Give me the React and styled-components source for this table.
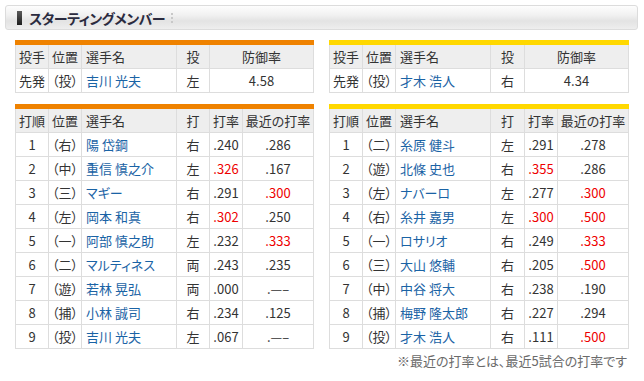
import React from "react";
import styled, { createGlobalStyle } from "styled-components";

const Global = createGlobalStyle`
  html, body { margin: 0; padding: 0; background: #fff; }
  body {
    font-family: "Noto Sans CJK JP", "Liberation Sans", sans-serif;
    font-size: 13px;
    color: #333;
    font-feature-settings: "palt";
  }
`;

const Page = styled.div`
  width: 644px;
  padding: 5px 0 0 0;
  box-sizing: border-box;
`;

const TitleBar = styled.div`
  margin: 0 6px 0 5px;
  height: 25px;
  box-sizing: border-box;
  border: 1px solid #dcdcdc;
  border-radius: 3px;
  background: linear-gradient(#fdfdfd 0%, #f1f1f1 40%, #e3e3e3 65%, #eeeeee 100%);
  display: flex;
  align-items: center;
  padding-left: 11px;
  gap: 7px;
`;

const Marker = styled.span`
  width: 5px;
  height: 14px;
  background: linear-gradient(#5a5a5a, #1e1e1e);
`;

const Title = styled.h2`
  margin: 0;
  font-size: 14px;
  font-weight: bold;
  color: #2b2b3f;
  line-height: 1;
  letter-spacing: -0.5px;
`;

const Dots = styled.span`
  width: 0;
  height: 10px;
  border-left: 2px dotted #c8c8c8;
  margin-left: -1px;
`;

const Columns = styled.div`
  display: grid;
  grid-template-columns: 299px 300px;
  column-gap: 15px;
  padding-left: 15px;
  margin-top: 10px;
`;

const Side = styled.div`
  display: flex;
  flex-direction: column;
`;

const Stack = styled.div`
  display: flex;
  flex-direction: column;
  gap: 11px;
`;

const Block = styled.div`
  border-top: 5px solid ${(p) => p.$color};
`;

const Table = styled.table`
  width: 100%;
  border-collapse: collapse;
  table-layout: fixed;
`;

const Th = styled.th`
  height: 23px;
  padding: 0 ${(p) => (p.$align === "left" ? "4px" : "0")};
  border: 1px solid #dddddd;
  border-top: none;
  background: #eeeeee;
  font-weight: normal;
  text-align: ${(p) => p.$align || "center"};
  white-space: nowrap;
`;

const Td = styled.td`
  height: 23px;
  padding: 0 ${(p) => (p.$align === "left" ? "4px" : "0")};
  border: 1px solid #dddddd;
  text-align: ${(p) => p.$align || "center"};
  white-space: nowrap;
  color: ${(p) => (p.$red ? "#ee0000" : "#333")};
`;

const Name = styled.a`
  color: #1a63a5;
  text-decoration: none;
`;

const Note = styled.p`
  margin: 4px 2px 0 0;
  text-align: right;
  font-size: 13px;
  color: #6a6a6a;
  line-height: 16px;
`;

const pitchers = {
  left: { name: "吉川 光夫", hand: "左", era: "4.58" },
  right: { name: "才木 浩人", hand: "右", era: "4.34" },
};

const NA = ".—–";

const lineups = {
  left: [
    ["1", "（右）", "陽 岱鋼", "右", ".240", false, ".286", false],
    ["2", "（中）", "重信 慎之介", "左", ".326", true, ".167", false],
    ["3", "（三）", "マギー", "右", ".291", false, ".300", true],
    ["4", "（左）", "岡本 和真", "右", ".302", true, ".250", false],
    ["5", "（一）", "阿部 慎之助", "左", ".232", false, ".333", true],
    ["6", "（二）", "マルティネス", "両", ".243", false, ".235", false],
    ["7", "（遊）", "若林 晃弘", "両", ".000", false, NA, false],
    ["8", "（捕）", "小林 誠司", "右", ".234", false, ".125", false],
    ["9", "（投）", "吉川 光夫", "左", ".067", false, NA, false],
  ],
  right: [
    ["1", "（二）", "糸原 健斗", "左", ".291", false, ".278", false],
    ["2", "（遊）", "北條 史也", "右", ".355", true, ".286", false],
    ["3", "（左）", "ナバーロ", "左", ".277", false, ".300", true],
    ["4", "（右）", "糸井 嘉男", "左", ".300", true, ".500", true],
    ["5", "（一）", "ロサリオ", "右", ".249", false, ".333", true],
    ["6", "（三）", "大山 悠輔", "右", ".205", false, ".500", true],
    ["7", "（中）", "中谷 将大", "右", ".238", false, ".190", false],
    ["8", "（捕）", "梅野 隆太郎", "右", ".227", false, ".294", false],
    ["9", "（投）", "才木 浩人", "右", ".111", false, ".500", true],
  ],
};

function PitcherTable({ color, p, handW }) {
  return (
    <Block $color={color}>
      <Table>
        <colgroup>
          <col style={{ width: 33 }} />
          <col style={{ width: 33 }} />
          <col style={{ width: 95 }} />
          <col style={{ width: handW }} />
          <col />
        </colgroup>
        <thead>
          <tr>
            <Th>投手</Th>
            <Th>位置</Th>
            <Th $align="left">選手名</Th>
            <Th>投</Th>
            <Th>防御率</Th>
          </tr>
        </thead>
        <tbody>
          <tr>
            <Td>先発</Td>
            <Td>（投）</Td>
            <Td $align="left">
              <Name>{p.name}</Name>
            </Td>
            <Td>{p.hand}</Td>
            <Td>{p.era}</Td>
          </tr>
        </tbody>
      </Table>
    </Block>
  );
}

function LineupTable({ color, rows, handW }) {
  return (
    <Block $color={color}>
      <Table>
        <colgroup>
          <col style={{ width: 33 }} />
          <col style={{ width: 33 }} />
          <col style={{ width: 95 }} />
          <col style={{ width: handW }} />
          <col style={{ width: 33 }} />
          <col />
        </colgroup>
        <thead>
          <tr>
            <Th>打順</Th>
            <Th>位置</Th>
            <Th $align="left">選手名</Th>
            <Th>打</Th>
            <Th>打率</Th>
            <Th>最近の打率</Th>
          </tr>
        </thead>
        <tbody>
          {rows.map((r) => (
            <tr key={r[0]}>
              <Td>{r[0]}</Td>
              <Td>{r[1]}</Td>
              <Td $align="left">
                <Name>{r[2]}</Name>
              </Td>
              <Td>{r[3]}</Td>
              <Td $red={r[5]}>{r[4]}</Td>
              <Td $red={r[7]}>{r[6]}</Td>
            </tr>
          ))}
        </tbody>
      </Table>
    </Block>
  );
}

export default function App() {
  return (
    <Page>
      <Global />
      <TitleBar>
        <Marker />
        <Title>スターティングメンバー</Title>
        <Dots />
      </TitleBar>
      <Columns>
        <Side>
          <Stack>
            <PitcherTable color="#ef8200" p={pitchers.left} handW={33} />
            <LineupTable color="#ef8200" rows={lineups.left} handW={33} />
          </Stack>
        </Side>
        <Side>
          <Stack>
            <PitcherTable color="#ffd800" p={pitchers.right} handW={34} />
            <LineupTable color="#ffd800" rows={lineups.right} handW={34} />
          </Stack>
          <Note>※最近の打率とは、最近5試合の打率です</Note>
        </Side>
      </Columns>
    </Page>
  );
}
